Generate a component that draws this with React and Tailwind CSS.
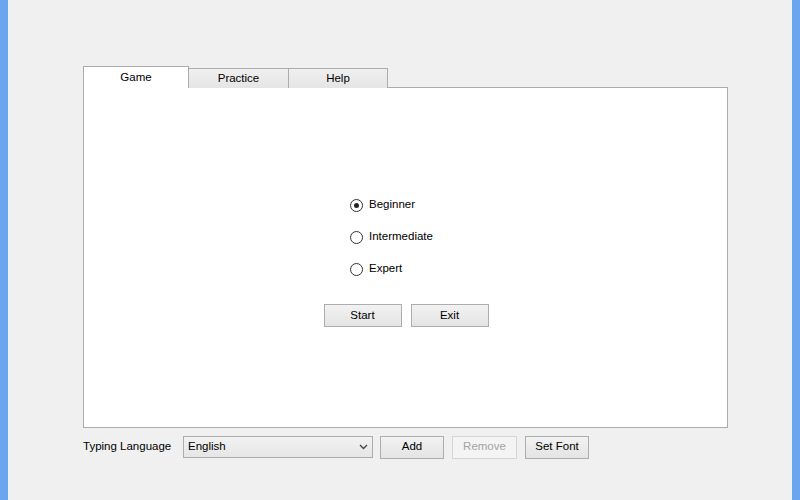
import React from "react";

function Radio({ checked, label }) {
  return (
    <div className="flex items-center h-[16px]">
      <div className="w-[13px] h-[13px] rounded-full border border-[#333] bg-white flex items-center justify-center">
        {checked && <div className="w-[5px] h-[5px] rounded-full bg-[#222]" />}
      </div>
      <span className="ml-[6px] text-[11.5px] text-black">{label}</span>
    </div>
  );
}

function Btn({ children, w, disabled }) {
  return (
    <div
      className={
        "h-[23px] flex items-center justify-center text-[11.5px] border " +
        (disabled
          ? "border-[#d5d5d5] bg-[#f4f4f4] text-[#a3a3a3]"
          : "border-[#adadad] bg-gradient-to-b from-[#f2f2f2] to-[#e4e4e4] text-black")
      }
      style={{ width: w }}
    >
      {children}
    </div>
  );
}

export default function App() {
  return (
    <div
      className="w-[800px] h-[500px] flex bg-[#f0f0f0]"
      style={{ fontFamily: '"Liberation Sans", Arial, sans-serif' }}
    >
      <div className="w-[8px] h-full bg-[#6aa6f0]" />
      <div className="flex-1 flex flex-col pl-[75px] pt-[66px]">
        {/* Tabs */}
        <div className="flex items-end h-[22px] relative z-10">
          <div className="w-[106px] h-[22px] bg-white border border-b-0 border-[#acacac] flex justify-center pt-[2px] text-[11.5px] text-black">
            Game
          </div>
          <div className="w-[100px] h-[20px] border border-l-0 border-b-0 border-[#acacac] bg-gradient-to-b from-[#f0f0f0] to-[#e5e5e5] flex items-center justify-center text-[11.5px] text-black">
            Practice
          </div>
          <div className="w-[99px] h-[20px] border border-l-0 border-b-0 border-[#acacac] bg-gradient-to-b from-[#f0f0f0] to-[#e5e5e5] flex items-center justify-center text-[11.5px] text-black">
            Help
          </div>
        </div>
        {/* Panel */}
        <div className="w-[645px] h-[341px] -mt-[1px] bg-white border border-[#acacac] flex flex-col">
          <div className="pt-[109px] pl-[266px] flex flex-col gap-[16px]">
            <Radio checked label="Beginner" />
            <Radio label="Intermediate" />
            <Radio label="Expert" />
          </div>
          <div className="flex justify-center gap-[9px] mt-[27px] pl-[1px]">
            <Btn w={78}>Start</Btn>
            <Btn w={78}>Exit</Btn>
          </div>
        </div>
        {/* Bottom row */}
        <div className="flex items-center mt-[8px] h-[22px]">
          <span className="text-[11.5px] text-black w-[100px]">Typing Language</span>
          <div className="w-[190px] h-[22px] border border-[#acacac] bg-gradient-to-b from-[#f2f2f2] to-[#e6e6e6] flex items-center pl-[4px] pr-[4px]">
            <span className="flex-1 text-[11.5px] text-black">English</span>
            <svg width="9" height="6" viewBox="0 0 9 6">
              <path d="M1 1 L4.5 4.5 L8 1" stroke="#444" strokeWidth="1.4" fill="none" />
            </svg>
          </div>
          <div className="ml-[7px]">
            <Btn w={64}>Add</Btn>
          </div>
          <div className="ml-[8px]">
            <Btn w={65} disabled>Remove</Btn>
          </div>
          <div className="ml-[8px]">
            <Btn w={64}>Set Font</Btn>
          </div>
        </div>
      </div>
      <div className="w-[8px] h-full bg-[#6aa6f0]" />
    </div>
  );
}
